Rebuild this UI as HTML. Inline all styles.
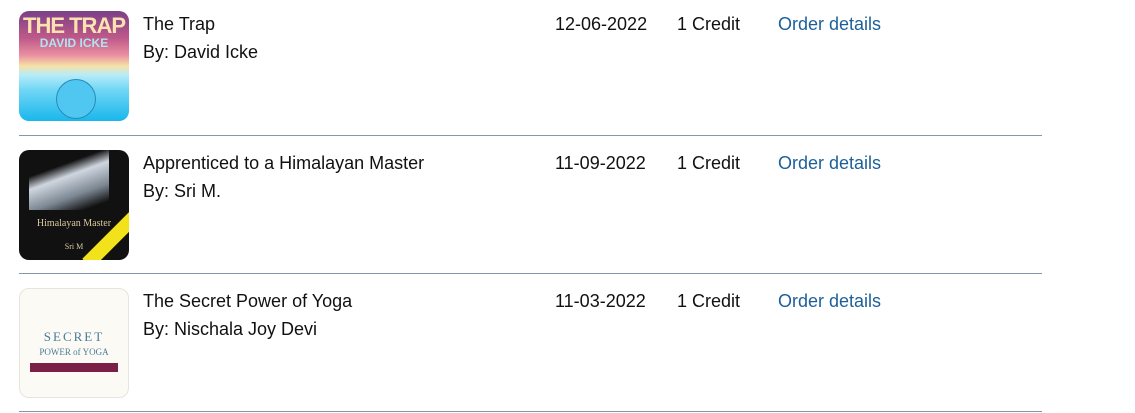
<!DOCTYPE html>
<html><head><style>
body{margin:0;background:#fff;font-family:"Liberation Sans",sans-serif;color:#111;width:1135px;height:413px;overflow:hidden;position:relative}
.row{position:absolute;left:19px;width:1023px;height:138px;border-bottom:1px solid #8497ad}
.img{position:absolute;left:0;top:11px;width:110px;height:110px;border-radius:10px;overflow:hidden}
.t{position:absolute;font-size:18px;white-space:nowrap}
.a{color:#1d5f99}
</style></head><body>
<div class="row" style="top:-3px">
 <div class="img" style="top:14px;background:linear-gradient(180deg,#7a3f86 0%,#c05a8a 25%,#e98fa0 40%,#f6e2a6 50%,#b7ecf8 58%,#6fd6f5 72%,#19b7ec 100%)">
  <div style="position:absolute;top:2px;width:110px;text-align:center;font:bold 22px 'Liberation Sans';color:#fbe2b0;letter-spacing:-1px;white-space:nowrap">THE TRAP</div>
  <div style="position:absolute;top:25px;width:110px;text-align:center;font:bold 12px 'Liberation Sans';color:#aee3f3;white-space:nowrap">DAVID ICKE</div>
  <div style="position:absolute;left:37px;top:68px;width:38px;height:38px;border-radius:50%;background:#4fc7f0;border:1px solid #2a8ab8"></div>
 </div>
 <div class="t" style="left:124px;top:17px">The Trap</div>
 <div class="t" style="left:124px;top:45px">By: David Icke</div>
 <div class="t" style="left:536px;top:17px">12-06-2022</div>
 <div class="t" style="left:658px;top:17px">1 Credit</div>
 <div class="t a" style="left:759px;top:17px">Order details</div>
</div>
<div class="row" style="top:135px">
 <div class="img" style="top:15px;background:#111">
  <div style="position:absolute;left:10px;top:0;width:80px;height:60px;background:linear-gradient(160deg,#111 30%,#cfd6df 45%,#7c8793 70%,#111 90%)"></div>
  <div style="position:absolute;top:68px;width:110px;text-align:center;font:10px 'Liberation Serif';color:#d8c8a0">Himalayan Master</div>
  <div style="position:absolute;top:92px;width:110px;text-align:center;font:8px 'Liberation Serif';color:#d8c8a0">Sri M</div>
  <div style="position:absolute;right:-18px;bottom:14px;width:70px;height:14px;background:#f2e21c;transform:rotate(-45deg)"></div>
 </div>
 <div class="t" style="left:124px;top:18px">Apprenticed to a Himalayan Master</div>
 <div class="t" style="left:124px;top:46px">By: Sri M.</div>
 <div class="t" style="left:536px;top:18px">11-09-2022</div>
 <div class="t" style="left:658px;top:18px">1 Credit</div>
 <div class="t a" style="left:759px;top:18px">Order details</div>
</div>
<div class="row" style="top:273px">
 <div class="img" style="top:15px;background:#fbfaf5;border:1px solid #e6e4dc;box-sizing:border-box">
  <div style="position:absolute;top:40px;width:108px;text-align:center;font:13px 'Liberation Serif';color:#4a7b96;letter-spacing:2px">SECRET</div>
  <div style="position:absolute;top:58px;width:108px;text-align:center;font:9px 'Liberation Serif';color:#4a7b96">POWER of YOGA</div>
  <div style="position:absolute;left:10px;top:74px;width:88px;height:9px;background:#7a1f46"></div>
 </div>
 <div class="t" style="left:124px;top:18px">The Secret Power of Yoga</div>
 <div class="t" style="left:124px;top:46px">By: Nischala Joy Devi</div>
 <div class="t" style="left:536px;top:18px">11-03-2022</div>
 <div class="t" style="left:658px;top:18px">1 Credit</div>
 <div class="t a" style="left:759px;top:18px">Order details</div>
</div>
</body></html>
